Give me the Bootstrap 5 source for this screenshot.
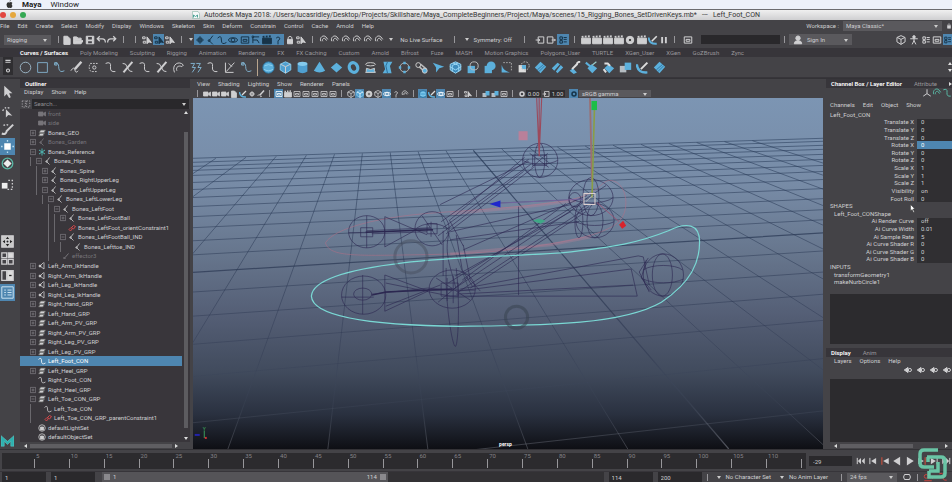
<!DOCTYPE html>
<html lang="en">
<head>
<meta charset="utf-8">
<meta name="viewport" content="width=device-width, initial-scale=1">
<title>Autodesk Maya 2018</title>
<link href="https://cdn.jsdelivr.net/npm/bootstrap@5.3.0/dist/css/bootstrap.min.css" rel="stylesheet">
<style>
:root{--ui:#444347;--deep:#2c2b2e;--tree:#39363b;--txt:#cfcfd1;--dim:#99979c;--blue:#4e86b0;--ico:#5cb0dc}
body{background:var(--ui);color:var(--txt);font:6px/8px Roboto,"Liberation Sans",sans-serif}
button,input,select{font:inherit;color:inherit;background:none;border:0;padding:0;margin:0;border-radius:0;min-width:0}
button{display:inline-flex;align-items:center;justify-content:center;white-space:nowrap}
select{appearance:none}
svg{display:block}
.gl{width:10px;height:10px;fill:none;stroke:currentColor;stroke-width:1.6}
.mac-bar{height:9px;background:#edf1fa;color:#222;font-size:8px;padding-left:22px;gap:9px}
.mac-bar .apple{left:6px;top:0}
.title-bar{height:11px;background:linear-gradient(#f0f0f0,#cfcfd1);border-top:1px solid #6c6c70;color:#333;font-size:7px;line-height:10px}
.dots{left:0;top:2px;gap:4px}
.dots i{width:6px;height:6px;border-radius:50%}
.menu-bar{height:11px}
.menus{gap:8px}
.menus button{color:var(--txt)}
.pick{background:#5a595d;position:relative}
.pick select{width:100%;height:100%;padding-left:3px}
.pick::after,.tri{content:"";border:2px solid transparent;border-top:3px solid #ccc;border-bottom:0}
.pick::after{position:absolute;right:4px;top:calc(50% - 1px);pointer-events:none}
.status-line{height:17px}
.cell{flex:1 1 0;height:11px;min-width:0}
.sep{width:1px;height:7px;flex:none;background:#98979b}
.lit{background:var(--blue);color:#173449}
.tabs-row{height:9px;background:#37353a;gap:12px;padding-left:20px}
.tabs-row button,.faint{color:var(--dim)}
.tabs-row button.on,.on{color:#fff;font-weight:600}
.shelf{height:21px;border-bottom:1px solid #37353a}
.shelf-grip{width:10px;background:#2f2e31;margin:0 4px 2px 3px}
.shelf-rule{width:1px;height:17px;margin:0 2px;background:#b9a58e}
.shelf button{width:17px;height:17px}
.shelf .gl{width:13px;height:13px;stroke-width:1.2}
.workarea{min-height:0;border-top:1px solid #333236}
.toolbox{width:16px}
.toolbox button{width:15px;height:17px}
.toolbox .gl{width:13px;height:13px}
.outliner{width:170px;margin-left:4px;background:var(--ui)}
.search-row{height:10px;margin-top:3px}
.search-row input{background:#29282b;padding-left:2px}
.search-row input::placeholder{color:#8f8e92;opacity:1}
.tree-box{background:var(--tree);min-height:0}
.tree{margin:0;padding:0;list-style:none}
.tree li{flex:1 1 0;min-height:0;overflow:hidden;display:flex;align-items:center;white-space:nowrap;gap:2px;padding-left:10px}
.tree li.chosen{background:var(--blue);color:#fff}
.tree li.off{color:#77757a}
.tree .gl{width:8px;height:8px;flex:none}
.plus{width:5px;height:5px;flex:none;border:1px solid #858388;margin-right:1px}
.plus.none{border-color:transparent}
.guide{width:4px;height:10px;flex:none;border-left:1px solid #6a686d}
.guide.gap{border-color:transparent}
.vbar{width:8px;padding:2px;gap:18px}
.vbar b{width:4px;background:#5d5c60}
.hbar{height:7px;gap:3px;padding:0 4px}
.hbar b{height:4px;background:#5f5e62}
.up,.down,.left,.right{width:0;height:0;border:2px solid transparent}
.up{border-bottom:3px solid #ddd;border-top:0}.down{border-top:3px solid #ddd;border-bottom:0}
.left{border-right:3px solid #ddd;border-left:0}.right{border-left:3px solid #ddd;border-right:0}
.viewport{margin-left:3px;min-width:0}
.view-menus{height:10px;padding-left:4px;gap:8px}
.view-tools{height:9px}
.view-tools .cell{height:9px;flex:0 0 auto;width:9px}
.view-tools .gl{width:8px;height:8px}
.view-tools input{width:15px;background:#2e2d30;height:7px;text-align:center}
.view-tools .pick{width:72px;height:7px;margin-left:1px}
.view-tools .pick select{line-height:7px}
.stage{min-height:0;background:#101117}
.side{width:126px;margin-left:3px}
.side-tabs{height:9px;background:#37353a;gap:12px;padding-left:5px}
.channels{height:175px;display:grid;grid-auto-rows:1fr;margin-top:2px}
.channels label,.channels div{display:flex;align-items:center;min-height:0}
.channels label span{width:88px;text-align:right;margin-right:3px;flex:none}
.channels input{background:#302f32;flex:1 1 0;padding-left:4px;align-self:stretch}
.channels .chosen input{background:var(--blue);color:#fff}
.pool{background:var(--deep)}
.time-row{height:22px;padding:3px 0 2px 2px;border-top:1px solid #333236;gap:3px}
.ruler{background:var(--deep);min-width:0;padding-left:32px}
.ruler span{flex:1 1 0;position:relative;color:#858388;line-height:6px;padding-left:2px}
.ruler span::before{content:"";position:absolute;left:0;bottom:1px;width:1px;height:9px;background:#98979b}
.ruler span:last-child{flex:0 0 5px}
.frame-box{width:43px;background:#2a292c;height:10px;padding-left:4px}
.play{width:97px}
.play button{flex:1 1 0}
.range-row{height:11px;padding-left:2px;gap:5px;border-top:1px solid #37353a}
.range-row input{width:44px;background:#2a292c;padding-left:3px;height:10px}
.range-row .gl{flex:none}
.range-track{background:#323134;height:10px;margin-left:2px;min-width:0}
.range-bar{width:57%;background:#555458;gap:3px;padding:0 2px}
.range-bar b{width:6px;height:6px;background:#8a898d}
.brand{right:5px;bottom:3px;width:29px;height:31px;pointer-events:none}
.pointer{right:36px;top:204px;width:6px;height:9px;pointer-events:none}
</style>
<script src="https://cdn.jsdelivr.net/npm/bootstrap@5.3.0/dist/js/bootstrap.bundle.min.js"></script>
</head>
<body class="d-flex flex-column vh-100 overflow-hidden position-relative">
<header>
  <div class="mac-bar d-flex align-items-center position-relative">
    <svg class="apple position-absolute" width="7" height="8" viewBox="0 0 14 16" fill="#333"><path d="M9 1q1 0 1-1-3 0-3 3 2 0 2-2zM7 5q3-2 6 1-3 2 0 6-2 5-4 4-2-1-4 0Q1 15 1 9q1-6 6-4z"/></svg>
    <strong>Maya</strong><span>Window</span>
  </div>
  <div class="title-bar d-flex align-items-center justify-content-center position-relative">
    <div class="dots position-absolute d-flex"><i style="background:#e2463f"></i><i style="background:#e5a73c"></i><i style="background:#35a853"></i></div>
    <svg width="8" height="8" viewBox="0 0 16 16" class="me-1"><path d="M1 1h11l3 4v10H1z" fill="#f5f8f8" stroke="#7a9"/><path d="M3 13V8l4 3 4-3v5" stroke="#4aa397" stroke-width="2" fill="none"/></svg>
    <span>Autodesk Maya 2018: /Users/lucasridley/Desktop/Projects/Skillshare/Maya_CompleteBeginners/Project/Maya/scenes/15_Rigging_Bones_SetDrivenKeys.mb*&nbsp;&nbsp; ---&nbsp;&nbsp; Left_Foot_CON</span>
  </div>
  <nav class="menu-bar d-flex align-items-center">
    <div class="menus d-flex" data-menu="File,Edit,Create,Select,Modify,Display,Windows,Skeleton,Skin,Deform,Constrain,Control,Cache,Arnold,Help"></div>
    <label for="ws" class="ms-auto me-1">Workspace :</label>
    <div class="pick" style="width:99px;height:10px"><select id="ws"><option>Maya Classic*</option></select></div>
    <button aria-label="Lock workspace" class="ms-1 me-0"><svg class="gl" data-i="lock" style="width:6px"></svg></button>
  </nav>
  <div class="status-line d-flex align-items-center" id="status"></div>
  <div class="tabs-row d-flex align-items-center" id="shelf-tabs"></div>
  <div class="shelf d-flex align-items-center">
    <div class="shelf-grip align-self-stretch d-flex flex-column justify-content-around align-items-center"><svg class="gl" data-i="lines" style="width:6px"></svg><svg class="gl" data-i="ring" style="width:6px"></svg></div>
    <div class="d-flex" id="shelf-a"></div><div class="shelf-rule"></div><div class="d-flex" id="shelf-b"></div>
    <div class="ms-auto me-0 d-flex flex-column gap-1"><i class="up"></i><i class="down"></i></div>
  </div>
</header>

<main class="workarea d-flex flex-grow-1">
  <aside class="toolbox d-flex flex-column" id="tools"></aside>

  <section class="outliner d-flex flex-column">
    <div class="side-tabs d-flex align-items-center"><span class="on">Outliner</span></div>
    <div class="menus d-flex ps-1" data-menu="Display,Show,Help"></div>
    <div class="search-row d-flex"><svg class="gl faint" data-i="dashed" style="width:12px"></svg><input type="search" aria-label="Search" placeholder="Search..." class="flex-grow-1"><i class="tri align-self-center me-1" style="margin-left:-7px"></i></div>
    <div class="tree-box d-flex flex-grow-1">
      <ul class="tree d-flex flex-column flex-grow-1" id="tree"></ul>
      <div class="vbar d-flex flex-column align-items-center"><i class="up"></i><b class="flex-grow-1"></b><i class="down" style="margin-top:-9px"></i></div>
    </div>
    <div class="hbar d-flex align-items-center"><i class="left"></i><b class="flex-grow-1"></b><i class="right me-2"></i></div>
  </section>

  <section class="viewport d-flex flex-column flex-grow-1">
    <div class="view-menus menus d-flex align-items-center" data-menu="View,Shading,Lighting,Show,Renderer,Panels"></div>
    <div class="view-tools d-flex align-items-center" id="view-tools"></div>
    <div class="stage flex-grow-1">
<svg width="100%" height="100%" viewBox="193 99 629 349" preserveAspectRatio="xMidYMid slice" fill="none">
<defs>
<linearGradient id="sky" x1="0" y1="0" x2="0" y2="1"><stop offset="0" stop-color="#7c95b3"/><stop offset=".25" stop-color="#778ba6"/><stop offset=".45" stop-color="#66758c"/><stop offset=".62" stop-color="#545e75"/><stop offset=".78" stop-color="#414b5d"/><stop offset=".9" stop-color="#2a3140"/><stop offset="1" stop-color="#0e0f14"/></linearGradient>
<linearGradient id="ink" gradientUnits="userSpaceOnUse" x1="0" y1="140" x2="0" y2="448"><stop offset="0" stop-color="#263a58" stop-opacity=".8"/><stop offset=".5" stop-color="#27334e" stop-opacity=".65"/><stop offset=".7" stop-color="#27304a" stop-opacity=".4"/><stop offset=".84" stop-color="#4a5468" stop-opacity=".2"/><stop offset="1" stop-color="#a5a9b5" stop-opacity=".45"/></linearGradient>
</defs>
<rect x="193" y="99" width="629" height="349" fill="url(#sky)"/>
<g id="grid" stroke="url(#ink)" stroke-width=".7"></g>
<path d="M193 272.5 822 233M473 151 727 448" stroke="url(#ink)" stroke-width="1.2"/>
<path d="M326 243C335 228 380 217 437 213S540 206 570 200 600 180 610 181 627 195 624 210 605 235 550 244 470 254 410 255 330 256 326 243z" stroke="#b56f86" stroke-opacity=".65" stroke-width=".8"/>
<path d="M450 214 527 207 575 201M450 254 550 245 590 237" stroke="#b98298" stroke-opacity=".35" stroke-width="3"/>
<g stroke="#2b2750" stroke-width=".6">
<ellipse cx="367" cy="232" rx="18" ry="16"/><path d="M361 228h12v9h-12zM367 216v32M349 233h18M385 217v30L418 229 430 229M385 217 427 235M367 231 430 228M372 234 427 232"/><path d="M366 232.500 433 230" stroke-width="1.600"/>
<ellipse cx="432" cy="229" rx="17" ry="17"/><path d="M427 224h10v10h-10zM431 222v15M415 230c8-8 25-8 34 0M422 216 442 245M449 220 463 246M443 228 530 165M441 222 528 160M446 234 533 168M438 236 523 172M450 220 524 158M440 205 528 162"/>
<ellipse cx="539.500" cy="161" rx="17.500" ry="17"/><ellipse cx="539" cy="161" rx="5" ry="17"/><path d="M532 156h14v10h-14zM522 161c9 5 26 5 35 0M529 154 548 168M547 154 531 168"/>
<ellipse cx="590" cy="198" rx="22" ry="18"/><ellipse cx="590" cy="197" rx="8" ry="19"/><ellipse cx="574" cy="200" rx="6" ry="7"/><path d="M568 198c9 7 36 7 44 0M572 208 605 186"/>
<ellipse cx="594" cy="221" rx="19" ry="17"/><ellipse cx="594" cy="221" rx="8" ry="17"/><ellipse cx="578" cy="222" rx="4" ry="16"/><path d="M575 222c9 5 28 5 38 0"/>
<path d="M452 290 582 203M448 283 574 206M458 292 588 207M462 280 565 204M470 288 585 212M455 276 570 212M443 231v45M456 235 462 270 472 286M518 207v88M450 240 578 222M450 232 570 205M463 250 586 196"/>
<ellipse cx="364" cy="295" rx="22" ry="19"/><ellipse cx="363" cy="294" rx="9" ry="6"/><path d="M363 275v39M342 297h32M385 275v36L428 291zM372 294 428 288 452 290M386 283 450 296M386 306 440 285"/><path d="M372 295 386 292 452 289" stroke-width="1.500"/>
<ellipse cx="452" cy="289" rx="23" ry="19"/><path d="M441 283h17v13h-17zM447 278v23M453 276v27M430 290h45M436 278 470 300M468 277 438 302M446 268c-1 35 6 77 9 78s5-45 1-78M449 233C443 255 452 270 456 290M463 245 470 280 480 291"/>
<path d="M460 289 637 256l5 1 6 28M458 291 630 269l6 27H450M456 294 632 285"/>
<ellipse cx="662" cy="275" rx="20" ry="21"/><ellipse cx="661" cy="275" rx="10" ry="21"/><path d="M642 270c8-6 32-6 39 0M642 279c10 5 30 5 40 0M647 258 638 272 648 292M645 260 640 278 650 290"/>
</g>
<path d="M312 296C313 281 345 270 403 263 450 257 500 257 560 253 615 247 637 243 667 231 685 222 698 224 698 242 698 262 690 282 660 302 620 325 540 325 460 326 370 325 313 316 312 296z" stroke="#7ad8d4" stroke-width="1.200"/>
<path d="M536 99 538.500 157 541 99M538.500 99V157" stroke="#9c4a5c" stroke-width="1.100"/>
<path d="M589 99 591 182" stroke="#9b6f72" stroke-width="1.800"/><path d="M593.500 108 591 198" stroke="#8a9d45" stroke-width="1.600"/>
<path d="M590.500 102h5.500v9h-5.500z" fill="#1cbe48"/><path d="M518 132h9v9h-9z" fill="#b9809a"/>
<path d="M500 203.500 583 199.500" stroke="#7a65a5" stroke-width=".8"/><path d="M489 204.500 500 201v7z" fill="#1f27cc"/>
<path d="M532 221 538 219 545 221 540 224z" fill="#3fa886"/><path d="M596 203 618 222" stroke="#a05070" stroke-width=".8"/>
<path d="M618 225 622 221 625 226 621 229z" fill="#d8232c"/><path d="M583 194h11v11h-11z" stroke="#ddd0cf"/><path d="M585 202 592 196" stroke="#ddd0cf" stroke-width=".6"/>
<circle cx="411" cy="257" r="16" stroke="#444c5c" stroke-opacity=".45" stroke-width="3"/><circle cx="516" cy="317" r="11" stroke="#394350" stroke-opacity=".55" stroke-width="3"/>
<path d="M205.500 430v7" stroke="#3a9a5a"/><path d="M196 434h5" stroke="#2222aa" stroke-width="2"/><path d="M206 437h2" stroke="#c33" stroke-width="2"/>
<text x="204" y="430" font-size="5" fill="#3fb060">Y</text>
<text x="505" y="445" font-size="5" font-weight="700" fill="#fff" text-anchor="middle">persp</text>
</svg>
    </div>
  </section>

  <aside class="side d-flex flex-column">
    <div class="side-tabs d-flex align-items-center text-nowrap overflow-hidden"><span class="on">Channel Box / Layer Editor</span><span class="faint">Attribute</span><i class="right ms-auto"></i></div>
    <div class="d-flex justify-content-end" style="height:9px"><svg class="gl" data-i="axis"></svg><svg class="gl" data-i="magnet" style="color:#58b7a4"></svg><svg class="gl" data-i="curve1" style="color:#58b7a4"></svg></div>
    <div class="menus side-menus d-flex ps-1 mt-1" data-menu="Channels,Edit,Object,Show"></div>
    <div class="channels" id="channels"></div>
    <div class="pool flex-grow-1 mt-2 ms-1"></div>
    <div class="side-tabs d-flex align-items-center mt-1"><span class="on">Display</span><span class="faint">Anim</span></div>
    <div class="menus d-flex ps-1 ms-1" data-menu="Layers,Options,Help"></div>
    <div class="d-flex justify-content-end" style="gap:3px"><svg class="gl" data-i="layer"></svg><svg class="gl" data-i="layer"></svg><svg class="gl" data-i="layer"></svg><svg class="gl" data-i="layer"></svg></div>
    <div class="pool ms-1 mt-1" style="height:63px"></div>
    <div class="hbar d-flex align-items-center ms-1"><i class="left"></i><b style="width:64%"></b><i class="right ms-auto"></i></div>
  </aside>
</main>

<footer>
  <div class="time-row d-flex align-items-center">
    <div class="ruler d-flex flex-grow-1 align-self-stretch" id="ruler"></div>
    <input class="frame-box" aria-label="Current frame" value="-29">
    <div class="play d-flex" id="play"></div>
  </div>
  <div class="range-row d-flex align-items-center">
    <input aria-label="Animation start" value="1"><input aria-label="Playback start" value="1">
    <div class="range-track flex-grow-1 d-flex"><div class="range-bar d-flex align-items-center"><b></b><span>1</span><span class="ms-auto">114</span><b></b></div></div>
    <input aria-label="Playback end" value="114"><input aria-label="Animation end" value="200">
    <i class="sep"></i><i class="tri ms-1"></i><span>No Character Set</span><i class="tri ms-1"></i><span class="me-2">No Anim Layer</span><i class="sep"></i>
    <div class="pick" style="width:50px;height:9px"><select aria-label="Frame rate"><option>24 fps</option></select></div>
    <svg class="gl" data-i="loop"></svg><i class="sep"></i><svg class="gl" data-i="key" style="color:#c8433d"></svg><svg class="gl me-1" data-i="curve1" style="color:#c8433d"></svg>
  </div>
</footer>
<svg class="brand position-absolute" viewBox="0 0 29 31" fill="none" stroke="#69c4a5" stroke-width="3.500"><path d="M20 2H6Q2 2 2 6v9q0 4 4 4h10M9 9h14q4 0 4 4v12q0 4-4 4H11v-6M10 9v5M20 14v9h-9"/></svg>
<svg class="pointer position-absolute" viewBox="0 0 12 18" fill="#fff" stroke="#333"><path d="M1 1v13l3-3 3 6 2-1-3-6h4z"/></svg>

<script>
const glyphs={
lock:'<path d="M4 7h8v7H4z" fill="currentColor"/><path d="M5 7V4q3-4 6 0v3"/>',
lines:'<path d="M1 5h14M1 10h14" stroke-width="3"/>',ring:'<circle cx="8" cy="8" r="4" stroke-width="3"/>',
dashed:'<path d="M2 3h5v10H2zM9 3h5v10H9z" stroke-dasharray="2 2"/>',
page:'<path d="M3 2h6l4 4v9H3z" fill="currentColor"/>',
folder:'<path d="M1 3h5l2 2h5v3H5l-2 6H1zM5 9h11l-3 5H3z" fill="currentColor"/>',
save:'<path d="M2 2h12v12H2z" fill="currentColor"/><path d="M5 3h6v4H5zM5 10h6v3H5z" fill="#444347" stroke="none"/>',
undo:'<path d="M2 6h8q5 0 5 6M6 2 2 6l4 4" stroke-width="2"/>',redo:'<path d="M14 6H6q-5 0-5 6M10 2l4 4-4 4" stroke-width="2"/>',
sel:'<path d="M1 3h4v3H1zM2 10h4v3H2z"/><path d="M8 3v11l3-3 4 1z" fill="currentColor"/>',
snap:'<path d="M3 13V3h10M3 8h7l3 5" /><circle cx="3" cy="3" r="1.500"/>',
joint:'<path d="M11 1 5 9l6 6"/><circle cx="5" cy="9" r="1.500"/>',
plusg:'<path d="M8 2v12M2 8h12M5 5h6v6H5z"/>',
wave:'<path d="M1 5q6-6 6 3t8 4"/>',
orbit:'<ellipse cx="8" cy="8" rx="7" ry="3.500"/><circle cx="8" cy="8" r="3"/>',
box:'<path d="M2 3h12v10H2zM5 7h6v3H5z"/>',
film:'<path d="M1 5h14v9H1z" fill="currentColor"/><path d="M1 3l14-1" stroke-dasharray="3 2" stroke-width="3"/>',
q:'<path d="M5 5q3-4 6 0 0 3-3 4v6"/>',
magnet:'<path d="M3 10C0 4 7-1 11 3l3 4M6 10C4 7 8 4 10 6l2 3" />',
panelL:'<path d="M5 3h9v10H5zM1 8h6M5 6l3 2-3 2"/>',panelR:'<path d="M2 3h9v10H2zM9 8h6M13 6l2 2-2 2"/>',
list:'<path d="M3 3h4v4H3zM3 9h4v4H3zM9 4h5M9 7h5M9 11h5"/>',
eye:'<circle cx="8" cy="8" r="6" fill="currentColor"/><circle cx="8" cy="8" r="2.500" fill="#222"/>',
pause:'<path d="M5 3v10M11 3v10" stroke-width="3"/>',
man:'<circle cx="8" cy="3" r="2" fill="currentColor"/><path d="M2 6h12M8 5v5M8 9l-3 6M8 9l3 6"/>',
user:'<circle cx="8" cy="5" r="3.500" fill="currentColor"/><path d="M2 14q0-5 6-5t6 5z" fill="currentColor"/>',
circ:'<circle cx="8" cy="8" r="6.500" stroke="#9ab4c4"/>',sq:'<path d="M2 2h12v12H2z" stroke="#7ea9c4"/>',
curve1:'<path d="M2 3q7-3 6 4t6 6"/>',curve2:'<path d="M2 4q5-3 5 3t4 6l3-1" stroke="#7fb0cc"/><path d="M2 2h3v3H2z" stroke="#7fb0cc"/>',
pen:'<path d="M1 12q4-6 5-1t4 1"/><path d="M14 1 6 10" stroke-width="3"/>',
dots:'<path d="M13 3H4q-3 6 1 10h8" stroke-dasharray="2 1.500"/><circle cx="9" cy="8" r="2"/>',
ccurve:'<path d="M3 14C-1 4 9-1 14 5l-2 2M6 12c-2-5 3-7 6-5"/>',
slash:'<path d="M2 3q4-1 6 5t6 5"/><path d="M14 1 3 14" stroke-width="2.500"/>',
s2:'<path d="M2 3h5l-3 5h4l-4 6M9 3h5l-3 5h4l-4 6" stroke="#7fb0cc"/>',
arrowc:'<path d="M3 2v12h10M14 2 4 13M7 3l4 4"/>',
ball:'<circle cx="8" cy="8" r="7" fill="#5cb0dc" stroke="#2b6e99"/><path d="M2 10q6 4 12 0M3 6q5-3 10 0" stroke="#8bd0f0"/>',
cube:'<path d="M8 1l6.500 3v7L8 15l-6.500-4V4z" fill="#4f9fd0" stroke="#86cdf0"/><path d="M2 4l6 3 6-3M8 7v8"/>',
wcube:'<path d="M8 1l6.500 3v7L8 15l-6.500-4V4zM2 4l6 3 6-3M8 7v8"/>',
cyl:'<path d="M2 3v10q6 4 12 0V3z" fill="#4f9fd0" stroke="none"/><ellipse cx="8" cy="3.500" rx="6" ry="2.500" fill="#84c9ec" stroke="none"/>',
cone:'<path d="M8 1 15 12q-7 4-14 0z" fill="#5cb0dc" stroke="none"/>',
plane:'<path d="M8 2 15 8 8 14 1 8z" fill="#5cb0dc" stroke="none"/>',
torus:'<ellipse cx="8" cy="8" rx="5" ry="6" stroke="#5cb0dc" stroke-width="4" transform="rotate(-25 8 8)"/>',
lathe:'<ellipse cx="8" cy="4" rx="6" ry="2" stroke="#ccc"/><path d="M3 9q0 5-1 5h12q-2-2-1-5-5 3-10 0z" fill="#5cb0dc" stroke="#ccc"/>',
loft:'<path d="M3 1h11l-3 5 2 9H2l3-5z" fill="#5cb0dc" stroke="none"/><path d="M8 1 6 6l2 9" stroke="#2b6e99"/>',
rings:'<circle cx="8" cy="8" r="5.500" stroke="#bbb"/><path d="M8 1v3M8 12v3M1 8h3M12 8h3" stroke="#5cb0dc" stroke-width="3"/>',
ext:'<circle cx="4" cy="5" r="3" stroke="#ccc"/><path d="M5 7l7 6M7 4l7 6" stroke="#bbb" stroke-width="2"/><circle cx="12" cy="12" r="3" fill="#5cb0dc"/>',
bird:'<path d="M1 2l14 5-6 2-4 5 0-6z" fill="#5cb0dc" stroke="none"/>',
lattice:'<path d="M8 1l6.500 3v7L8 15l-6.500-4V4z" fill="#3e8bbb" stroke="#9bd8f5"/><path d="M1 7l7 4 7-4M5 2.500l7 3V13M11 2.500l-7 3V13" stroke="#9bd8f5"/>',
boolA:'<path d="M2 6h9v9H2z" fill="#5cb0dc" stroke="none"/><circle cx="10" cy="6" r="5" stroke="#bbb"/>',
boolB:'<path d="M2 6h9v9H2z" fill="#5cb0dc" stroke="none"/><circle cx="10" cy="6" r="5.500" fill="#5cb0dc" stroke="none"/>',
boolC:'<path d="M2 5q2 7 10 9H2z" fill="#5cb0dc" stroke="none"/><path d="M4 2h10v10" stroke="#aaa" stroke-dasharray="2 1.500"/>',
boolD:'<path d="M2 5h9v9H2z" fill="#ddd" stroke="none"/><path d="M6 5h5v5H6z" fill="#5cb0dc" stroke="none"/><circle cx="10" cy="6" r="5" stroke="#bbb" stroke-dasharray="2 1.500"/>',
patch:'<path d="M8 1 15 7 8 15 1 8z" fill="#5cb0dc" stroke="none"/><path d="M4 11 12 4M6 13l7-7" stroke="#2b6e99" stroke-width="1"/>',
patch2:'<path d="M1 9 8 2l3 2-7 8zM6 13l6-8 3 3-7 7z" fill="#5cb0dc" stroke="none"/>',
tool:'<path d="M6 9l5 5-4 2-5-4z" fill="#5cb0dc" stroke="none"/><path d="M5 10 11 4q0-3 4-3" stroke="#ddd" stroke-width="2.500"/>',
patch3:'<path d="M8 4 15 9 9 15 3 9z" fill="#5cb0dc" stroke="none"/><path d="M1 2l6 5" stroke="#5cb0dc" stroke-width="2.500"/><path d="M14 1 9 5" stroke="#9cc" stroke-width="1.500"/>',
patch4:'<path d="M8 4 15 9 9 15 3 9z" fill="#5cb0dc" stroke="none"/><path d="M2 10l3 4M3 3h4l3 3" stroke="#ddd" stroke-width="2.500"/>',
stack:'<path d="M1 6h8v8H1z" fill="#b5bcc2" stroke="none"/><path d="M7 2h8v9H7z" fill="#5cb0dc" stroke="none"/>',
sculpt:'<path d="M1 4q1 11 13 10" stroke="#5cb0dc" stroke-width="3"/><path d="M14 2 6 10" stroke="#ddd" stroke-width="2.500"/>',
arrow:'<path d="M4 1v13l3-3 3 5 2-1-2-5h4z" fill="currentColor" stroke="none"/>',
lasso:'<path d="M2 6q3-6 9-3" stroke-dasharray="2 2"/><path d="M6 4v10l3-3 5 1z" fill="currentColor" stroke="none"/>',
brush:'<path d="M1 13q5 2 6-3L15 2" stroke-width="2.500"/><path d="M3 3q4-2 6 0" stroke-dasharray="2 2"/>',
move:'<path d="M4 4h8v8H4z" fill="#fff" stroke="none"/><path d="M8 0v2M8 14v2M0 8h2M14 8h2" stroke="#bde"/>',
rot:'<circle cx="8" cy="8" r="6.500" stroke="#5ab8a5"/><path d="M8 3l5 5-5 5-5-5z" fill="#eee" stroke="none"/>',
scale:'<path d="M1 6h7v7H1z" fill="#eee" stroke="none"/><path d="M9 3h5v11H8" stroke-dasharray="2 2"/>',
one:'<path d="M1 1h14v14H1z" fill="#c9c9c9"/><path d="M8 2l2 3H6zM8 14l2-3H6zM2 8l3-2v4zM14 8l-3-2v4z" fill="#222" stroke="none"/><circle cx="8" cy="8" r="2" fill="#222"/>',
four:'<path d="M1 1h6v6H1zM9 9h6v6H9zM1 9h6v6H1z"/><path d="M9 1h6v6H9z" fill="#ddd"/>',
two:'<path d="M1 2h6v12H1z"/><path d="M8 2h7v12H8z" fill="#ddd"/><path d="M10 8h3" stroke="#222"/>',
tlist:'<path d="M1 1h14v14H1zM4 5h2M8 5h5M4 8h2M8 8h5M4 11h2M8 11h5" stroke="#cfe4f2" stroke-width="1.200"/>',
mlogo:'<path d="M0 15V2l8 7 8-7v13h-4V9l-4 4-4-4v6z" fill="#2db0ae" stroke="#65d3cf" stroke-width=".6"/>',
cam:'<path d="M1 4h9v8H1zM11 7l4-3v8l-4-3z" fill="currentColor"/>',
grp:'<path d="M5 2h10l-3 6H2zM4 8h9l-3 6H1z" fill="currentColor" stroke="#555"/>',
ref:'<path d="M8 1v14M2 4l12 8M14 4 2 12" stroke="#4fb3b0" stroke-width="2"/>',
ik:'<path d="M11 1 4 8l8 6V1"/><circle cx="4" cy="8" r="2" fill="currentColor"/>',
chain:'<path d="M7 7l4-4 4 2-4 5zM2 11l4-4 3 2-4 5z" stroke="#d2474a" stroke-width="2"/>',
eff:'<path d="M3 14l4-4 6-7M3 10l4 4" stroke-width="2"/>',
setg:'<circle cx="8" cy="8" r="6.500"/><path d="M5 6h6v6H5z" fill="currentColor"/>',
axis:'<path d="M8 2v7l-6 4M8 9l6 4"/>',layer:'<path d="M2 8l6-4v8z" fill="currentColor"/><circle cx="11" cy="8" r="2.500"/>',
loop:'<path d="M4 4h8q3 4 0 8H4Q1 8 4 4z"/>',key:'<circle cx="5" cy="7" r="3"/><path d="M8 7h7v4M12 7v3M2 14h12" />',
p0:'<path d="M2 3v10"/><path d="M8 3v10L3 8zM14 3v10L9 8z" fill="currentColor" stroke="none"/>',
p1:'<path d="M3 3v10"/><path d="M13 3v10L5 8z" fill="currentColor" stroke="none"/>',
p2:'<path d="M3 2v12" stroke="#d8503c"/><path d="M14 3v10L5 8z" fill="currentColor" stroke="none"/>',
p3:'<path d="M13 1v14L2 8z" fill="currentColor" stroke="none"/>'};
['p0','p1','p2','p3'].forEach((k,i)=>glyphs['p'+(7-i)]='<g transform="matrix(-1 0 0 1 16 0)">'+glyphs[k]+'</g>');
const svg=(n,c='')=>`<svg class="gl ${c}" viewBox="0 0 16 16" aria-hidden="true">${glyphs[n]}</svg>`;
const btn=(n,c='')=>`<button class="${c}" aria-label="${n}">${svg(n)}</button>`;
const $=id=>document.getElementById(id);
document.querySelectorAll('[data-i]').forEach(e=>{e.setAttribute('viewBox','0 0 16 16');e.innerHTML=glyphs[e.dataset.i]});
document.querySelectorAll('[data-menu]').forEach(e=>e.innerHTML=e.dataset.menu.split(',').map(t=>`<button>${t}</button>`).join(''));

/* Status line: each entry is [width share, kind, value] */
const bar=[[54,'pick','Rigging'],[7,'sep'],...'page folder save undo redo'.split(' ').map(n=>[11,'i',n]),[11,'sep'],[13,'sep'],
[11,'i','sel'],[11,'lit','sel'],[11,'i','sel'],[12,'sep'],[7,'tri'],
...'plusg joint wave orbit box snap film q'.split(' ').map(n=>[11,'lit',n]),[12,'i','lock'],[11,'i','sel'],[11,'sep'],
...Array(6).fill([11,'i','magnet']),[12,'tri'],[48,'t','No Live Surface'],[17,'sep'],[8,'tri'],[43,'t','Symmetry: Off'],[20,'sep'],
[11,'i','panelL'],[11,'i','panelR'],[12,'lit','list'],[11,'sep'],...'film film film film eye film sculpt pause'.split(' ').map(n=>[11,'i',n]),[10,'sep'],
[17,'i','box'],[82,'field'],[9,'sep'],[62,'sign'],[43,'none'],[12,'i','wcube'],[12,'i','man'],[12,'i','list'],[11,'i','box'],[9,'lit','list']];
$('status').innerHTML=bar.map(([w,k,v])=>{
 const inner={pick:`<div class="pick w-100 ms-1 me-1" style="height:10px"><select aria-label="Menu set"><option>${v}</option></select></div>`,sep:'<i class="sep"></i>',tri:'<i class="tri"></i>',
 i:btn(v),lit:btn(v),t:`<span class="text-nowrap">${v}</span>`,field:'<input aria-label="Quick input" class="w-100 ms-1" style="height:9px;background:#29282b">',
 sign:`<button class="pick w-100 h-100 justify-content-start ps-1">${svg('user')}<span class="ms-1">Sign In</span></button>`,none:''}[k];
 return `<div class="cell d-flex align-items-center justify-content-center ${k=='lit'?'lit':''}" style="flex-grow:${w}">${inner}</div>`}).join('');

$('shelf-tabs').innerHTML='Curves / Surfaces,Poly Modeling,Sculpting,Rigging,Animation,Rendering,FX,FX Caching,Custom,Arnold,Bifrost,Fuze,MASH,Motion Graphics,Polygons_User,TURTLE,XGen_User,XGen,GoZBrush,Zync'.split(',').map((t,i)=>`<button class="${i?'':'on'}">${t}</button>`).join('');
$('shelf-a').innerHTML='circ sq curve2 pen dots curve1 slash curve1 slash ccurve s2 curve1 arrowc curve2'.split(' ').map(n=>btn(n)).join('');
$('shelf-b').innerHTML='ball cube cyl cone plane torus lathe loft rings ext bird lattice boolA boolB boolC boolD patch patch2 tool patch3 patch4 stack sculpt patch'.split(' ').map(n=>btn(n)).join('');
$('tools').innerHTML=[['arrow','mt-1 mb-1'],['lasso',''],['brush',''],['move','lit'],['rot','mb-1'],['scale','mb-3'],['one','mt-4'],['four',''],['two',''],['tlist','lit'],['mlogo','mt-auto']].map(([n,c])=>btn(n,c)).join('');

/* Outliner rows: depth, expander, icon, name, state */
const rows=`0  cam front off|0  cam side off|0 + grp Bones_GEO|0 + joint Bones_Garden off|0 - ref Bones_Reference|1 - joint Bones_Hips|2 + joint Bones_Spine|2 + joint Bones_RightUpperLeg|2 - joint Bones_LeftUpperLeg|3 - joint Bones_LeftLowerLeg|4 - joint Bones_LeftFoot|5 + joint Bones_LeftFootBall|5  chain Bones_LeftFoot_orientConstraint1|5 - joint Bones_LeftFootBall_IND|6  joint Bones_Lefttoe_IND|4  eff effector3 off|0 + ik Left_Arm_IkHandle|0 + ik Right_Arm_IkHandle|0 + ik Left_Leg_IkHandle|0 + ik Right_Leg_IkHandle|0 + grp Right_Hand_GRP|0 + grp Left_Hand_GRP|0 + grp Left_Arm_PV_GRP|0 + grp Right_Arm_PV_GRP|0 + grp Right_Leg_PV_GRP|0 + grp Left_Leg_PV_GRP|0  wave Left_Foot_CON chosen|0 + grp Left_Heel_GRP|0  wave Right_Foot_CON|0 + grp Right_Heel_GRP|0 - grp Left_Toe_CON_GRP|1  wave Left_Toe_CON|1  chain Left_Toe_CON_GRP_parentConstraint1|0  setg defaultLightSet|0  setg defaultObjectSet`.split('|');
$('tree').innerHTML=rows.map(r=>{const [d,x,n,t,s='']=r.split(' ');
 return `<li class="${s}">${Array.from({length:+d},(_,i)=>`<i class="guide ${i<d-1&&i!=3?'gap':''}"></i>`).join('')}<svg class="gl plus-mark" style="width:6px" viewBox="0 0 16 16">${x?`<path d="M1 1h14v14H1zM4 8h8${x=='+'?'M8 4v8':''}" stroke="#8f8d92"/>`:''}</svg>${svg(n)}<span>${t}</span></li>`}).join('');

$('view-tools').innerHTML='| cam cam cam page sculpt plusg pen | *box film box box box box box | wcube *cube eye wcube *orbit q magnet | *ball sculpt *orbit box | sel | stack stack box | ring'.split(' ').map(n=>n=='|'?'<span class="cell d-flex align-items-center justify-content-center"><i class="sep"></i></span>':btn(n.replace('*',''),'cell '+(n[0]=='*'?'lit text-white':''))).join('')
+'<input aria-label="Exposure" value="0.00">'+btn('panelL','cell')+'<input aria-label="Gamma" value="1.00">'+btn('ring','cell lit ms-1')+'<div class="pick"><select aria-label="View transform"><option>sRGB gamma</option></select></div>';

const ch='*Left_Foot_CON|Translate X=0|Translate Y=0|Translate Z=0|Rotate X=0|Rotate Y=0|Rotate Z=0|Scale X=1|Scale Y=1|Scale Z=1|Visibility=on|Foot Roll=0|*SHAPES|>Left_Foot_CONShape|Ai Render Curve=off|Ai Curve Width=0.01|Ai Sample Rate=5|Ai Curve Shader R=0|Ai Curve Shader G=0|Ai Curve Shader B=0|*INPUTS|>transformGeometry1|>makeNurbCircle1'.split('|');
$('channels').innerHTML=ch.map(c=>{if(c[0]=='*')return `<div class="ps-0 ms-1">${c.slice(1)}</div>`;if(c[0]=='>')return `<div class="ps-2">${c.slice(1)}</div>`;
 const [a,b]=c.split('=');return `<label class="${a=='Rotate X'?'chosen':''}"><span>${a}</span><input value="${b}"></label>`}).join('');

$('ruler').innerHTML=Array.from({length:23},(_,i)=>`<span>${i<22?5+5*i:''}</span>`).join('');
$('play').innerHTML=[0,1,2,3,4,5,6,7].map(i=>btn('p'+i)).join('');

/* Ground grid: left and right heights of the rows, then top and bottom x of the columns */
const ys=[[159,139],[163,142],[167,146],[171,150],[176,155],[183,160],[190,166],[198,172],[207,180],[217,189],[228,199],[241,210],[255,220],[292,251],[316,272],[344,294],[376,320],[422,358],[480,410]];
let d=ys.map(([a,b])=>`M193 ${a}L822 ${b}`).join('');
d+='M217 159L193 175M247 158L193 198M277 157L193 255M307 156L130 448';
for(let i=0;i<16;i++)if(i!=5)d+=`M${335+27.7*i} ${155-.9*i}L${229+99.4*i} 448`;
$('grid').innerHTML=`<path d="${d}"/>`;
</script>
</body>
</html>
